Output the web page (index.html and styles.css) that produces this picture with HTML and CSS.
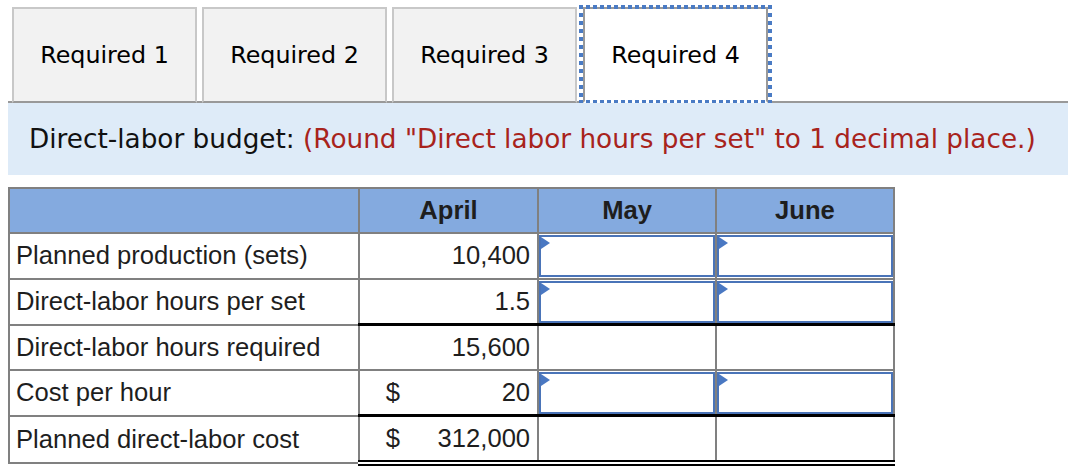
FILE: index.html
```html
<!DOCTYPE html>
<html>
<head>
	<meta charset="UTF-8">
	<title>Direct-labor budget</title>
<link rel="stylesheet" href="styles.css">
</head>
<body>

  <div class="tabs">
    <div class="tab">Required 1</div>
    <div class="tab">Required 2</div>
    <div class="tab">Required 3</div>
    <div class="tab active">Required 4</div>
  </div>

  <div class="hint">
    Direct-labor budget:&nbsp;<span class="red">(Round "Direct labor hours per set" to 1 decimal place.)</span>
  </div>

  <table class="budget">
    <thead>
      <tr>
        <th class="label"></th>
        <th>April</th>
        <th>May</th>
        <th>June</th>
      </tr>
    </thead>
    <tbody>
      <tr>
        <td class="label">Planned production (sets)</td>
        <td class="num">10,400</td>
        <td class="entry"><div class="box"><input type="text"></div></td>
        <td class="entry"><div class="box"><input type="text"></div></td>
      </tr>
      <tr class="line">
        <td class="label">Direct-labor hours per set</td>
        <td class="num">1.5</td>
        <td class="entry"><div class="box"><input type="text"></div></td>
        <td class="entry"><div class="box"><input type="text"></div></td>
      </tr>
      <tr>
        <td class="label">Direct-labor hours required</td>
        <td class="num">15,600</td>
        <td></td>
        <td></td>
      </tr>
      <tr class="line">
        <td class="label">Cost per hour</td>
        <td class="num"><div class="amount"><span>$</span><span>20</span></div></td>
        <td class="entry"><div class="box"><input type="text"></div></td>
        <td class="entry"><div class="box"><input type="text"></div></td>
      </tr>
      <tr class="total">
        <td class="label">Planned direct-labor cost</td>
        <td class="num"><div class="amount"><span>$</span><span>312,000</span></div></td>
        <td></td>
        <td></td>
      </tr>
    </tbody>
  </table>

</body>
</html>
```

FILE: styles.css
```css
body {
	margin: 0;
	padding-left: 8px;
	background-color: #fff;
	font-family: "DejaVu Sans", Verdana, sans-serif;
}

/* tab strip */
.tabs {
	display: flex;
	align-items: flex-end;
	padding: 7px 0 0 4px;
	border-bottom: 2px solid #999;
}
.tab {
	width: 185px;
	height: 96px;
	box-sizing: border-box;
	margin-right: 5px;
	margin-bottom: -2px;
	display: flex;
	align-items: center;
	justify-content: center;
	background-color: #f2f2f2;
	border: 2px solid #c8c8c8;
	border-bottom: 2px solid #999;
	font-size: 23.8px;
	color: #000;
}
.tab.active {
	position: relative;
	margin-left: 1px;
	background-color: #fff;
	border-color: #999;
	border-bottom-color: #fff;
}
.tab.active::after {
	content: "";
	position: absolute;
	top: -4px;
	left: -6px;
	right: -6px;
	bottom: -2px;
	background:
		repeating-linear-gradient(90deg, #4a7bc4 0 4px, transparent 4px 7px) top / 100% 4px no-repeat,
		repeating-linear-gradient(90deg, #4a7bc4 0 4px, transparent 4px 7px) bottom / 100% 3px no-repeat,
		repeating-linear-gradient(180deg, #4a7bc4 0 4px, transparent 4px 8px) left / 4px 100% no-repeat,
		repeating-linear-gradient(180deg, #4a7bc4 0 4px, transparent 4px 8px) right / 4px 100% no-repeat;
}

/* instruction bar */
.hint {
	height: 72px;
	display: flex;
	align-items: center;
	padding-left: 21px;
	background-color: #deebf8;
	font-size: 26.3px;
	color: #111;
}
.red {
	color: #a8231c;
}

/* budget table */
.budget {
	margin-top: 12px;
	border-collapse: collapse;
	width: 887px;
	font-family: "Liberation Sans", Arial, sans-serif;
	font-size: 25.6px;
	color: #1e1e1e;
}
.budget th,
.budget td {
	border: 2px solid #808080;
	padding: 0 7px;
}
.budget th {
	height: 43px;
	background-color: #84aadf;
	font-weight: bold;
	text-align: center;
	width: 164px;
}
.budget th.label {
	width: auto;
}
.budget td {
	height: 42.5px;
}
.budget td.label {
	padding-left: 6px;
	text-align: left;
	width: 339px;
}
.budget td.num {
	text-align: right;
}
.amount {
	display: flex;
	justify-content: space-between;
	padding-left: 19px;
}
.line td:not(.label) {
	border-bottom: 3px solid #000;
}
.total td:not(.label) {
	border-bottom: 6px double #000;
}

/* input cells */
.budget td.entry {
	padding: 1px 0 0 0;
	vertical-align: top;
}
.box {
	position: relative;
}
.box input {
	display: block;
	width: 100%;
	height: 42px;
	box-sizing: border-box;
	margin: 0;
	border: 2px solid #4a74b8;
	background-color: #fff;
	font-size: 22px;
}
.box::before {
	content: "";
	position: absolute;
	top: 2px;
	left: 2px;
	border-left: 9px solid #4a78c2;
	border-top: 6px solid transparent;
	border-bottom: 6px solid transparent;
}
```
